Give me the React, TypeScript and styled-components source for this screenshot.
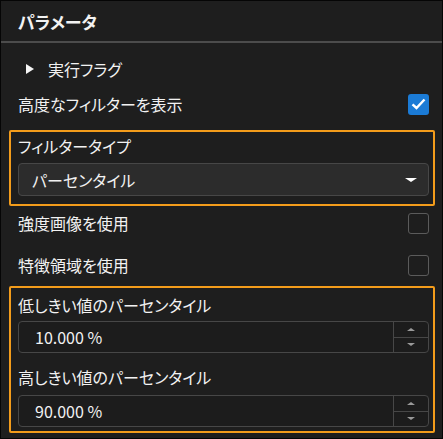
import React from "react";
import styled, { createGlobalStyle } from "styled-components";

const GlobalStyle = createGlobalStyle`
  html, body {
    margin: 0;
    padding: 0;
    background: #000;
  }
`;

const Panel = styled.div`
  width: 443px;
  height: 439px;
  box-sizing: border-box;
  border: 1px solid #050505;
  background: #1e1e1e;
  color: #f2f2f2;
  font-family: "Noto Sans CJK JP", "Noto Sans", sans-serif;
  font-feature-settings: "palt" 1;
  font-size: 16px;
  display: flex;
  flex-direction: column;
`;

const Header = styled.div`
  height: 40px;
  display: flex;
  align-items: center;
  padding-left: 17px;
  font-size: 17px;
  font-weight: 700;
  border-bottom: 2px solid #4c4c4c;
`;

const Body = styled.div`
  display: flex;
  flex-direction: column;
  padding: 0 7px 0 8px;
`;

const Row = styled.div<{ $h: number; $mt?: number }>`
  height: ${(p) => p.$h}px;
  margin-top: ${(p) => p.$mt ?? 0}px;
  display: flex;
  align-items: center;
  justify-content: space-between;
  padding: 0 6px 0 9px;
`;

const Expander = styled.div`
  display: flex;
  align-items: center;
  gap: 14px;
  padding-left: 8px;
`;

const Caret = styled.span`
  width: 0;
  height: 0;
  border-top: 5.5px solid transparent;
  border-bottom: 5.5px solid transparent;
  border-left: 8px solid #f5f5f5;
`;

const Check = styled.span<{ $on?: boolean }>`
  width: 21px;
  height: 21px;
  box-sizing: border-box;
  border-radius: 3px;
  display: flex;
  align-items: center;
  justify-content: center;
  background: ${(p) => (p.$on ? "#1b7bd6" : "transparent")};
  border: ${(p) => (p.$on ? "none" : "1.5px solid #5b5b5b")};
`;

const Group = styled.div<{ $mt: number; $pb: number }>`
  margin-top: ${(p) => p.$mt}px;
  border: 2px solid #f39c1b;
  border-radius: 2px;
  padding: 0 4px ${(p) => p.$pb}px 7px;
  display: flex;
  flex-direction: column;
`;

const Label = styled.div<{ $h: number; $pt?: number }>`
  height: ${(p) => p.$h}px;
  padding-top: ${(p) => p.$pt ?? 0}px;
  display: flex;
  align-items: center;
`;

const Select = styled.div`
  margin-top: 4px;
  height: 33px;
  box-sizing: border-box;
  background: #2c2c2c;
  border: 1.5px solid #474747;
  border-radius: 4px;
  display: flex;
  align-items: center;
  justify-content: space-between;
  padding: 0 11px 0 13px;
`;

const DownArrow = styled.span<{ $size: number; $color: string }>`
  width: 0;
  height: 0;
  border-left: ${(p) => p.$size}px solid transparent;
  border-right: ${(p) => p.$size}px solid transparent;
  border-top: ${(p) => p.$size / 2 + 1}px solid ${(p) => p.$color};
`;

const UpArrow = styled.span<{ $size: number; $color: string }>`
  width: 0;
  height: 0;
  border-left: ${(p) => p.$size}px solid transparent;
  border-right: ${(p) => p.$size}px solid transparent;
  border-bottom: ${(p) => p.$size / 2 + 1}px solid ${(p) => p.$color};
`;

const Spin = styled.div`
  height: 32px;
  box-sizing: border-box;
  border: 1.5px solid #474747;
  border-radius: 4px;
  display: flex;
  background: #1c1c1c;
`;

const SpinValue = styled.div`
  flex: 1;
  display: flex;
  align-items: center;
  padding-left: 16px;
`;

const SpinButtons = styled.div`
  width: 34px;
  border-left: 1.5px solid #474747;
  display: flex;
  flex-direction: column;
`;

const SpinButton = styled.div<{ $top?: boolean }>`
  flex: 1;
  display: flex;
  align-items: center;
  justify-content: center;
  border-bottom: ${(p) => (p.$top ? "1.5px solid #474747" : "none")};
`;

const CheckMark = () => (
  <svg width="15" height="12" viewBox="0 0 15 12">
    <path d="M1.5 6.3 L5.5 10 L13.5 1.5" fill="none" stroke="#fff" strokeWidth="2.4" />
  </svg>
);

const SpinBox = ({ value }: { value: string }) => (
  <Spin>
    <SpinValue>{value}</SpinValue>
    <SpinButtons>
      <SpinButton $top>
        <UpArrow $size={4} $color="#9a9a9a" />
      </SpinButton>
      <SpinButton>
        <DownArrow $size={4} $color="#9a9a9a" />
      </SpinButton>
    </SpinButtons>
  </Spin>
);

export default function App() {
  return (
    <>
      <GlobalStyle />
      <Panel>
        <Header>パラメータ</Header>
        <Body>
          <Row $h={36} $mt={8}>
            <Expander>
              <Caret />
              <span>実行フラグ</span>
            </Expander>
          </Row>
          <Row $h={34}>
            <span>高度なフィルターを表示</span>
            <Check $on>
              <CheckMark />
            </Check>
          </Row>
          <Group $mt={9} $pb={8}>
            <Label $h={27}>フィルタータイプ</Label>
            <Select>
              <span>パーセンタイル</span>
              <DownArrow $size={6} $color="#ffffff" />
            </Select>
          </Group>
          <Row $h={34}>
            <span>強度画像を使用</span>
            <Check />
          </Row>
          <Row $h={34} $mt={8}>
            <span>特徴領域を使用</span>
            <Check />
          </Row>
          <Group $mt={4} $pb={4}>
            <Label $h={33}>低しきい値のパーセンタイル</Label>
            <SpinBox value="10.000 %" />
            <Label $h={36} $pt={6}>高しきい値のパーセンタイル</Label>
            <SpinBox value="90.000 %" />
          </Group>
        </Body>
      </Panel>
    </>
  );
}
